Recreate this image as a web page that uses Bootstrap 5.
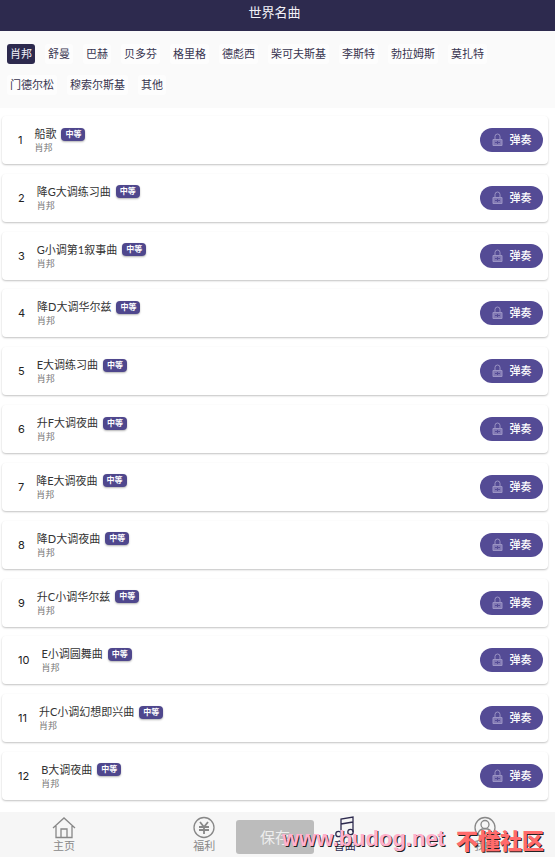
<!DOCTYPE html>
<html lang="zh-CN">
<head>
<meta charset="utf-8">
<meta name="viewport" content="width=device-width, initial-scale=1">
<title>世界名曲</title>
<link href="https://cdn.jsdelivr.net/npm/bootstrap@5.3.0/dist/css/bootstrap.min.css" rel="stylesheet">
<style>
body{font-family:Lato,"Noto Sans CJK SC",sans-serif;font-size:11px;line-height:16px;color:#333;background:#fff}
.app-head{background:#2d2a4e;color:#f2f1f8;height:31px;padding:4px 6px 0 0}
.app-head h1{font-size:13px;line-height:16px;font-weight:400}
.composers{background:#fafafa;padding:13px 48px 13px 7px;column-gap:10px;row-gap:11px}
.composer{border:0;border-radius:3px;background:#fdfdfd;color:#37344f;padding:2px 3px;line-height:16px}
.composer.active{background:#2d2a4e;color:#f2f1f8}
.songs{padding:8px 7px 12px 2px}
.song{height:48px;border-radius:4px;background:#fff;box-shadow:0 1px 2px rgba(0,0,0,.24);padding:0 5px 0 16px}
.song-no{font-family:Inter,sans-serif;font-size:11px;color:#222;margin-right:12px}
.song-title{gap:5px}
.song-name{font-size:11px;line-height:16px;color:#333}
.song-by{font-size:9px;line-height:12px;color:#777}
.level{background:#4f478d;color:#fff;border-radius:4px;font-size:8px;line-height:13px;font-weight:700;padding:0 4px;box-shadow:0 1px 2px rgba(0,0,0,.3)}
.play{background:#544b95;color:#fff;border:0;height:24px;width:63px;font-weight:500;gap:7px}
.bottom-bar{padding-bottom:2px}
.tabbar{background:#f6f6f6;height:45px;padding:4px 56px 0 50px}
.tabbar a{color:#888;width:28px;line-height:14px}
.tabbar a.current{color:#2d2a4e}
.save{left:236px;top:8px;width:78px;height:34px;border:0;border-radius:3px;background:#bcbcbc;color:#eee;font-size:15px}
.site-mark{left:282px;top:13px;line-height:28px;gap:11px;font-weight:700;white-space:nowrap;text-shadow:1px 1px #222}
.site-url{font-family:"Liberation Sans",sans-serif;font-size:22px;color:#ffb0cc}
.site-name{font-family:"Noto Sans CJK SC",sans-serif;font-weight:900;font-size:22px;color:#ff6b6b}
</style>
<script src="https://cdn.jsdelivr.net/npm/bootstrap@5.3.0/dist/js/bootstrap.bundle.min.js"></script>
</head>
<body>
<div class="min-vh-100 d-flex flex-column">
<header class="app-head text-center"><h1 class="m-0">世界名曲</h1></header>
<nav class="composers d-flex flex-wrap" id="composers" aria-label="作曲家"></nav>
<main class="songs flex-grow-1 d-flex flex-column justify-content-between" id="songs"></main>
<footer class="bottom-bar position-relative">
<nav class="tabbar d-flex justify-content-between">
<a href="#home" class="text-decoration-none text-center"><svg width="24" height="23" viewBox="0 0 24 23" fill="none" stroke="currentColor" stroke-width="1.3"><path d="M1 12L12 2l11 10M4 10v11.500h16V10M9 21v-8h6v8"/></svg><span class="d-block">主页</span></a>
<a href="#welfare" class="text-decoration-none text-center"><svg width="24" height="23" viewBox="0 0 24 23" fill="none" stroke="currentColor" stroke-width="1.3"><circle cx="12" cy="11.500" r="10"/><path stroke-width="1.800" d="M8 6l4 5 4-5M7 11h10M7 14h10M12 11v7"/></svg><span class="d-block">福利</span></a>
<a href="#music" class="current text-decoration-none text-center"><svg width="24" height="23" viewBox="0 0 24 23" fill="none" stroke="currentColor" stroke-width="1.300"><path d="M8 18V3l12-2v15M8 8l12-2"/><circle cx="5.500" cy="18" r="2.700"/><circle cx="17.500" cy="16" r="2.700"/></svg><span class="d-block">音曲</span></a>
<a href="#me" class="text-decoration-none text-center"><svg width="24" height="23" viewBox="0 0 24 23" fill="none" stroke="currentColor" stroke-width="1.300"><circle cx="12" cy="11.500" r="10"/><circle cx="12" cy="8.500" r="4"/><path d="M5 18c1-7 13-7 14 0"/></svg><span class="d-block">我的</span></a>
</nav>
<button type="button" class="save position-absolute">保存</button>
<div class="site-mark position-absolute d-flex"><span class="site-url">www.budog.net</span><span class="site-name">不懂社区</span></div>
</footer>
</div>
<script>
const composers=['肖邦','舒曼','巴赫','贝多芬','格里格','德彪西','柴可夫斯基','李斯特','勃拉姆斯','莫扎特','门德尔松','穆索尔斯基','其他'];
const songs=['船歌','降G大调练习曲','G小调第1叙事曲','降D大调华尔兹','E大调练习曲','升F大调夜曲','降E大调夜曲','降D大调夜曲','升C小调华尔兹','E小调圆舞曲','升C小调幻想即兴曲','B大调夜曲'];
document.getElementById('composers').innerHTML=composers.map((c,i)=>`<button type="button" class="composer${i?'':' active'}">${c}</button>`).join('');
document.getElementById('songs').innerHTML=songs.map((s,i)=>`<article class="song d-flex align-items-center">
<span class="song-no">${i+1}</span>
<div class="flex-grow-1"><div class="song-title d-flex align-items-center"><span class="song-name">${s}</span><span class="level">中等</span></div><div class="song-by">肖邦</div></div>
<button type="button" class="play rounded-pill d-flex align-items-center justify-content-center"><svg width="11" height="14" viewBox="0 0 11 14" fill="none" stroke="#9b94c4"><path d="M3 6V3.500a2.500 2.500 0 0 1 5 0V6"/><path fill="#8178b3" d="M1 6.500h9v6H1z"/><path stroke="#544b95" d="M3 9.500h5M5.500 8v3"/></svg>弹奏</button>
</article>`).join('');
</script>
</body>
</html>
